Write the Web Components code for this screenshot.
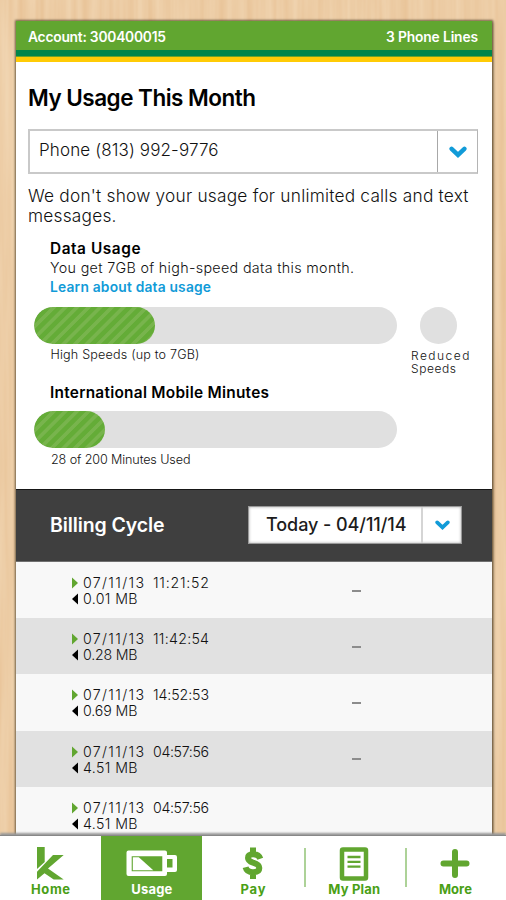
<!DOCTYPE html>
<html lang="en">
<head>
<meta charset="utf-8">
<title>My Usage</title>
<style>
html,body{margin:0;height:100%;overflow:hidden}
body{font-family:Inter,"Liberation Sans",sans-serif;color:#111;width:506px;height:900px}
</style>
</head>
<body>
<usage-app></usage-app>
<script>
// Single line of text whose tracking is adjusted to a given measure.
class FitText extends HTMLElement{
  connectedCallback(){
    if(!this.shadowRoot){
      this.attachShadow({mode:'open'}).innerHTML=`<style>:host{display:block;white-space:pre}span{display:inline-block;vertical-align:top}</style><span><slot></slot></span>`;
    }
    const s=this.shadowRoot.querySelector('span'),n=this.textContent.length,w=+this.getAttribute('w');
    s.style.letterSpacing='0px';
    const d=(w-s.getBoundingClientRect().width)/(n-1);
    s.style.letterSpacing=d.toFixed(3)+'px';
    s.style.marginRight=(-d).toFixed(3)+'px';
  }
}

class WoodGrain extends HTMLElement{
  connectedCallback(){
    this.attachShadow({mode:'open'}).innerHTML=`<style>:host{display:block;width:506px;height:900px}svg{display:block}</style>
    <svg width="506" height="900">
      <filter id="g" x="0" y="0" width="100%" height="100%" color-interpolation-filters="sRGB">
        <feTurbulence type="fractalNoise" baseFrequency="0.11 0.004" numOctaves="3" seed="8"/>
        <feColorMatrix values="0.05 0 0 0 0.902  0.11 0 0 0 0.745  0.16 0 0 0 0.565  0 0 0 0 1"/>
      </filter>
      <rect width="506" height="900" filter="url(#g)"/>
    </svg>`;
  }
}

class AccountBar extends HTMLElement{
  connectedCallback(){
    this.attachShadow({mode:'open'}).innerHTML=`<style>
    :host{display:flex;justify-content:space-between;box-sizing:border-box;height:41px;padding:5px 14px 0 12px;color:#fff;
      font-size:13.8px;font-weight:600;line-height:23px;
      background:linear-gradient(#61a630 0 29px,#00854a 29px 35px,#6aa02c 35px 36px,#ffcb05 36px 41px)}
    </style><fit-text w="138">Account: 300400015</fit-text><fit-text w="92">3 Phone Lines</fit-text>`;
  }
}

class SelectBox extends HTMLElement{
  connectedCallback(){
    const small=this.hasAttribute('small');
    this.attachShadow({mode:'open'}).innerHTML=`<style>
    :host{display:flex;box-sizing:border-box;background:#fff;border:2px solid #c9c9c9;border-right:1px solid #b4b4b4;height:45px;
      font-size:17px;line-height:38px}
    :host([small]){width:214px;height:38px;border:1px solid #999;box-shadow:inset 0 0 3px #aaa;font-size:18px;font-weight:500;line-height:36px}
    .v{flex:1;padding-left:9px}
    :host([small]) .v{padding-left:17px}
    .b{width:39px;border-left:1px solid #a8a8a8;display:flex;align-items:center;justify-content:center}
    :host([small]) .b{width:38px;border-left:2px solid #d5d5d5}
    </style><div class="v"><slot></slot></div>
    <div class="b"><svg width="${small?15:18}" height="${small?10:12}" viewBox="0 0 18 12"><path d="M2.600 2.800 9 8.900l6.400-6.100" fill="none" stroke="#119bd8" stroke-width="4.400" stroke-linecap="round" stroke-linejoin="miter"/></svg></div>`;
  }
}

class UsageMeter extends HTMLElement{
  connectedCallback(){
    const f=this.getAttribute('fill');
    this.attachShadow({mode:'open'}).innerHTML=`<style>
    :host{display:block;width:362.5px;height:36.5px;border-radius:19px;background:#e0e0e0;overflow:hidden}
    div{width:${f}px;height:100%;border-radius:19px;background:repeating-linear-gradient(135deg,#64ac37 0 3.8px,#78b44d 4.6px 7.4px,#64ac37 8.2px)}
    </style><div></div>`;
  }
}

class UsagePanel extends HTMLElement{
  connectedCallback(){
    this.attachShadow({mode:'open'}).innerHTML=`<style>
    :host{display:block;box-sizing:border-box;height:427px;padding:22px 14px 0 12px;background:#fff}
    .title{font-size:22.5px;font-weight:600;line-height:28px;margin-bottom:17px;color:#000}
    .note{font-size:17.3px;line-height:20px;font-weight:300;padding:12px 0 13px}
    select-box{font-weight:300}
    .ind{margin-left:22px}
    .h{font-size:15.4px;font-weight:600;line-height:18px;color:#000;position:relative;top:.5px}
    .p{font-size:14.3px;font-weight:300;line-height:19px;padding:1px 0}
    .link{font-size:13.8px;font-weight:600;line-height:18px;color:#119bd8}
    .bars{display:flex;margin:11px 0 0 6px;align-items:flex-start}
    .dot{width:37px;height:36.5px;border-radius:50%;background:#e0e0e0;margin-left:23.500px}
    .small{font-size:12.6px;font-weight:300;line-height:12.5px}
    .two{font-size:12px;line-height:13px;height:25px}
    .labels{display:flex;justify-content:space-between;padding:5.500px 8.500px 9.500px 22.500px}
    </style>
    <fit-text class="title" w="228">My Usage This Month</fit-text>
    <select-box><fit-text w="179.5">Phone (813) 992-9776</fit-text></select-box>
    <div class="note"><fit-text w="440.5">We don't show your usage for unlimited calls and text</fit-text><fit-text w="88.5">messages.</fit-text></div>
    <div class="ind">
      <fit-text class="h" w="90.5">Data Usage</fit-text>
      <fit-text class="p" w="304">You get 7GB of high-speed data this month.</fit-text>
      <fit-text class="link" w="161">Learn about data usage</fit-text>
    </div>
    <div class="bars"><usage-meter fill="121"></usage-meter><div class="dot"></div></div>
    <div class="labels small"><fit-text w="149">High Speeds (up to 7GB)</fit-text><div class="two"><fit-text w="58.5">Reduced</fit-text><fit-text w="45">Speeds</fit-text></div></div>
    <fit-text class="h ind" w="219">International Mobile Minutes</fit-text>
    <div class="bars" style="margin-top:9.500px"><usage-meter fill="70.500"></usage-meter></div>
    <fit-text class="small" style="margin:6px 0 0 23px" w="139.5">28 of 200 Minutes Used</fit-text>`;
  }
}

class BillingBar extends HTMLElement{
  connectedCallback(){
    this.attachShadow({mode:'open'}).innerHTML=`<style>
    :host{display:flex;justify-content:space-between;align-items:center;box-sizing:border-box;height:73px;padding:0 30px 1px 34px;
      background:#3f3f3f;border-top:1px solid #161616;border-bottom:1px solid #707070;color:#fff;font-size:19.5px;font-weight:600}
    select-box{color:#1c1c1c}
    </style><fit-text w="114.5">Billing Cycle</fit-text><select-box small><fit-text w="140.5">Today - 04/11/14</fit-text></select-box>`;
  }
}

class UsageRow extends HTMLElement{
  connectedCallback(){
    const a=k=>this.getAttribute(k);
    this.attachShadow({mode:'open'}).innerHTML=`<style>
    :host{display:flex;box-sizing:border-box;height:56.2px;padding:13px 0 0 56px;background:#f8f8f8;font-size:14.2px;font-weight:300;line-height:16px}
    :host([alt]){background:#e1e1e1}
    .c{width:280px}
    .l{display:flex;align-items:center}
    svg{width:6px;height:12px;margin-right:5px}
    .t{margin-left:9px}
    i svg{display:block;width:9px;height:2px;margin:14.500px 0 0}
    </style>
    <div class="c">
      <div class="l"><svg viewBox="0 0 6 12"><path d="M0 .5 6 6 0 11.500z" fill="#61a630"/></svg><fit-text w="61">07/11/13</fit-text><fit-text class="t" w="56">${a('time')}</fit-text></div>
      <div class="l"><svg viewBox="0 0 6 12"><path d="M6 .5 0 6l6 5.500z" fill="#000"/></svg><fit-text w="54.5">${a('size')}</fit-text></div>
    </div>${this.hasAttribute('plain')?'':'<i><svg viewBox="0 0 9 2"><path d="M0 0h9v2H0z" fill="#8c8c8c"/></svg></i>'}`;
  }
}

const ICONS={
  Home:`<path d="M3 0h7.700v15L3 22zM3 24.700 19 8H29.700L14 21.500 29.700 32.500h-10L10.500 26.300 3 32.500z" fill="#61a630"/>`,
  Usage:`<path d="M-6.500 3.500h36.500q2 0 2 2V8h8q2 0 2 2v13q0 2-2 2h-8v2q0 2-2 2H-6.500q-2 0-2-2V5.500q0-2 2-2z" fill="#fff"/><path d="M-3.300 9.200H27.300V24.200H-3.300zM32 12h5.500v8.500H32z" fill="#61a630"/><path d="M-2.200 10.200h6L18.300 23.200H-2.200z" fill="#fff"/>`,
  Pay:`<path d="M24.300 11.800q-1.500-4.500-7.300-4.500-5 0-5 3.700 0 3 5 4.600 6.300 1.800 6.300 5.400 0 4.200-6.300 4.200-6.200 0-7.400-5M17 .5v7M17 25v7" fill="none" stroke="#61a630" stroke-width="6"/>`,
  'My Plan':`<rect x="5" y="2.500" width="24" height="29" rx="1" fill="none" stroke="#61a630" stroke-width="4.500"/><path d="M10.500 10h13M10.500 14.800h13M10.500 19.600h13" stroke="#61a630" stroke-width="2.300"/>`,
  More:`<path d="M17 5v23M5.500 16.500h23" stroke="#61a630" stroke-width="6" stroke-linecap="round"/>`
};

class NavItem extends HTMLElement{
  connectedCallback(){
    const n=this.getAttribute('name');
    this.attachShadow({mode:'open'}).innerHTML=`<style>
    :host{display:flex;flex-direction:column;align-items:center;position:relative;flex:1;color:#4a9f16;font-size:13px;font-weight:700;line-height:16px;padding-top:11px}
    :host([active]){background:#61a630;color:#fff}
    :host([rule])::after{content:"";position:absolute;right:-2.500px;top:12px;width:2.500px;height:39px;background:#add298}
    svg{width:34px;height:32px;overflow:visible;margin-bottom:2px}
    </style><svg viewBox="0 0 34 32">${ICONS[n]}</svg><fit-text w="${this.getAttribute('w')}">${n}</fit-text>`;
  }
}

class NavBar extends HTMLElement{
  connectedCallback(){
    this.attachShadow({mode:'open'}).innerHTML=`<style>
    :host{display:flex;height:64px;background:#fff;box-shadow:0 -1px 0 #888,0 -3px 2px #999}
    </style><nav-item name="Home" w="39"></nav-item><nav-item name="Usage" w="41" active></nav-item><nav-item name="Pay" w="25" rule></nav-item><nav-item name="My Plan" w="52" rule></nav-item><nav-item name="More" w="33"></nav-item>`;
  }
}

class UsageApp extends HTMLElement{
  connectedCallback(){
    this.attachShadow({mode:'open'}).innerHTML=`<style>
    :host{display:grid;width:506px;height:900px;grid-template:836px 64px / 506px;overflow:hidden}
    wood-grain,.page{grid-area:1/1}
    wood-grain{height:836px;overflow:hidden}
    .page{overflow:hidden;padding:21px 14px 0 16px;height:815px;position:relative}
    .card{height:900px;background:#f8f8f8;box-shadow:0 0 2px 1px #4a3a22aa,1px 1px 3px #4a3a2299}
    nav-bar{grid-area:2/1;position:relative}
    </style>
    <wood-grain></wood-grain>
    <div class="page"><div class="card">
      <account-bar></account-bar>
      <usage-panel></usage-panel>
      <billing-bar></billing-bar>
      <usage-row time="11:21:52" size="0.01 MB"></usage-row>
      <usage-row alt time="11:42:54" size="0.28 MB"></usage-row>
      <usage-row time="14:52:53" size="0.69 MB"></usage-row>
      <usage-row alt time="04:57:56" size="4.51 MB"></usage-row>
      <usage-row plain time="04:57:56" size="4.51 MB"></usage-row>
    </div></div>
    <nav-bar></nav-bar>`;
  }
}
for(const [n,c] of [['fit-text',FitText],['wood-grain',WoodGrain],['account-bar',AccountBar],['select-box',SelectBox],['usage-meter',UsageMeter],['usage-panel',UsagePanel],['billing-bar',BillingBar],['usage-row',UsageRow],['nav-item',NavItem],['nav-bar',NavBar],['usage-app',UsageApp]])customElements.define(n,c);
</script>
</body>
</html>
